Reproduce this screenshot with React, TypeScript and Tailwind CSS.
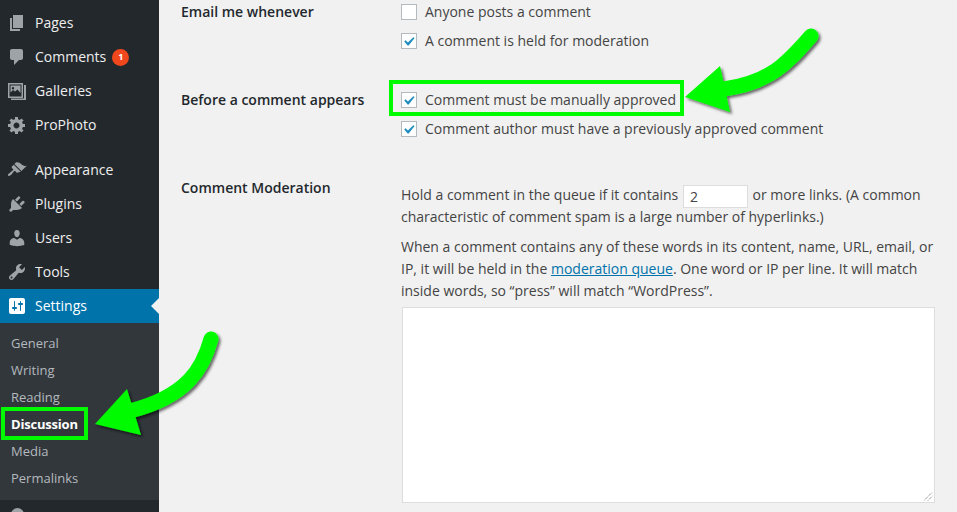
const ICONS: Record<string, string> = {
  pages: 'M6 15V2h10v13H6zm-1 1h8v2H3V5h2v11z',
  comments: 'M5 2h9c1.1 0 2 .9 2 2v7c0 1.1-.9 2-2 2h-2l-5 5v-5H5c-1.1 0-2-.9-2-2V4c0-1.1.9-2 2-2z',
  gear: 'M18 12h-2.18c-.17.7-.44 1.35-.81 1.93l1.54 1.54-2.1 2.1-1.54-1.54c-.58.36-1.23.63-1.91.79V19H8v-2.18c-.68-.16-1.33-.43-1.91-.79l-1.54 1.54-2.12-2.12 1.54-1.54c-.36-.58-.63-1.23-.79-1.91H1V9.03h2.17c.16-.7.44-1.35.8-1.94L2.43 5.55l2.1-2.1 1.54 1.54c.58-.37 1.24-.64 1.93-.81V2h3v2.18c.68.16 1.33.43 1.91.79l1.54-1.54 2.12 2.12-1.54 1.54c.36.59.64 1.24.8 1.94H18V12zm-8.5 1.5c1.66 0 3-1.34 3-3s-1.34-3-3-3-3 1.34-3 3 1.34 3 3 3z',
  appearance: 'M14.48 11.06L7.41 3.99l1.5-1.5c.5-.56 2.3-.47 3.51.32 1.21.8 1.43 1.28 2.91 2.1 1.18.64 2.45 1.26 4.45.85zm-.71.71L6.7 4.7 4.93 6.47c-.39.39-.39 1.02 0 1.41l1.06 1.06c.39.39.39 1.03 0 1.42-.6.6-1.43 1.11-2.21 1.69-.35.26-.7.53-1.01.84C1.43 13.23.4 14.96 1.4 15.96c.5.5 2.23-.53 3.07-1.38.31-.31.58-.66.84-1.01.58-.78 1.09-1.61 1.69-2.21.39-.39 1.02-.39 1.41 0l1.06 1.06c.39.39 1.02.39 1.41 0z',
  plugins: 'M13.11 4.36L9.87 7.6 8 5.73l3.24-3.24c.35-.34 1.05-.2 1.56.32.52.51.66 1.21.31 1.55zm-8 1.77l.91-1.12 9.01 9.01-1.19.84c-.71.71-2.63 1.16-3.82 1.16H6.14L4.9 17.26c-.59.59-1.54.59-2.12 0-.59-.58-.59-1.53 0-2.12l1.24-1.24v-3.88c0-1.13.4-3.19 1.09-3.89zm7.26 3.97l3.24-3.24c.34-.35 1.04-.21 1.55.31.52.51.66 1.21.31 1.55l-3.24 3.25z',
  users: 'M10 9.25c-2.27 0-2.73-3.44-2.73-3.44C7 4.02 7.82 2 9.97 2c2.16 0 2.98 2.02 2.71 3.81 0 0-.41 3.44-2.68 3.44zm0 2.57L12.72 10c2.39 0 4.52 2.33 4.52 4.53v2.49s-3.65 1.13-7.24 1.13c-3.65 0-7.24-1.13-7.24-1.13v-2.49c0-2.25 1.94-4.48 4.47-4.48z',
  tools: 'M16.68 9.77c-1.34 1.34-3.3 1.67-4.95.99l-5.41 6.52c-.99.99-2.59.99-3.58 0s-.99-2.59 0-3.57l6.52-5.42c-.68-1.65-.35-3.61.99-4.95 1.28-1.28 3.12-1.62 4.72-1.06l-2.89 2.89 2.82 2.82 2.86-2.87c.53 1.58.18 3.39-1.08 4.65zM3.81 16.21c.4.39 1.04.39 1.43 0 .4-.4.4-1.04 0-1.43-.39-.4-1.03-.4-1.43 0-.39.39-.39 1.03 0 1.43z',
  settings: 'M18 16V4c0-1.1-.9-2-2-2H4c-1.1 0-2 .9-2 2v12c0 1.1.9 2 2 2h12c1.1 0 2-.9 2-2zM8 11h1c.55 0 1 .45 1 1s-.45 1-1 1H8v1.5c0 .28-.22.5-.5.5s-.5-.22-.5-.5V13H6c-.55 0-1-.45-1-1s.45-1 1-1h1V5.5c0-.28.22-.5.5-.5s.5.22.5.5V11zm5-2h-1c-.55 0-1-.45-1-1s.45-1 1-1h1V5.5c0-.28.22-.5.5-.5s.5.22.5.5V7h1c.55 0 1 .45 1 1s-.45 1-1 1h-1v5.5c0 .28-.22.5-.5.5s-.5-.22-.5-.5V9z',
  galleries: 'M1 2h15v15H1V2zm1.5 1.5v12h12v-12h-12zM3.500 4.500h10v7.500l-3-3.500-2.500 2-2-1.500-2.500 2.500V4.500zM6 6a1.200 1.200 0 1 0 0 2.400A1.200 1.200 0 0 0 6 6zM17 4h2v15H4v-1.500h13V4z',
};

const Icon = ({ name, white }: { name: string; white?: boolean }) => (
  <svg viewBox="0 0 20 20" className={`w-5 h-5 shrink-0 ${white ? 'fill-white' : 'fill-[#9ea3a8]'}`}>
    <path fillRule="evenodd" d={ICONS[name]} />
  </svg>
);

const MenuRow = ({ icon, label, badge }: { icon: string; label: string; badge?: string }) => (
  <div className="h-[34px] shrink-0 flex items-center pl-[7px] text-[14px] text-[#eeeeee]">
    <Icon name={icon} />
    <span className="ml-2 pb-[2px]">{label}</span>
    {badge && (
      <span className="ml-[6px] w-[17px] h-[17px] rounded-full bg-[#f1471d] text-white text-[9px] font-bold flex items-center justify-center">
        {badge}
      </span>
    )}
  </div>
);

const SUBMENU = ['General', 'Writing', 'Reading', 'Discussion', 'Media', 'Permalinks'];

const Sidebar = () => (
  <aside className="w-[159px] shrink-0 bg-[#23282d] flex flex-col pt-[6px]">
    <MenuRow icon="pages" label="Pages" />
    <MenuRow icon="comments" label="Comments" badge="1" />
    <MenuRow icon="galleries" label="Galleries" />
    <MenuRow icon="gear" label="ProPhoto" />
    <div className="h-[11px] shrink-0" />
    <MenuRow icon="appearance" label="Appearance" />
    <MenuRow icon="plugins" label="Plugins" />
    <MenuRow icon="users" label="Users" />
    <MenuRow icon="tools" label="Tools" />
    <div className="relative h-[34px] shrink-0 bg-[#0073aa] flex items-center pl-[7px] text-[14px] text-white">
      <Icon name="settings" white />
      <span className="ml-2 pb-[2px]">Settings</span>
      <span className="absolute right-0 top-[9px] border-y-8 border-r-8 border-y-transparent border-r-[#f1f1f1]" />
    </div>
    <div className="bg-[#32373c] pt-[7px] pb-[8px] h-[177px] shrink-0">
      {SUBMENU.map(item => (
        <div
          key={item}
          className={`h-[27px] flex items-center pl-[11px] text-[13px] ${item === 'Discussion' ? 'font-bold tracking-[-0.2px] text-white' : 'text-[#b4b9be]'}`}
        >
          {item}
        </div>
      ))}
    </div>
    <div className="flex items-start shrink-0 pl-[11px] pt-2 text-[13px] text-[#9ea3a8]">
      <span className="w-[13px] h-[13px] rounded-full bg-[#9ea3a8] shrink-0" />
      <span className="ml-[10px] leading-none pt-[3px]">Collapse menu</span>
    </div>
  </aside>
);

const Check = ({ on, label }: { on?: boolean; label: string }) => (
  <div className="h-[16px] flex items-center">
    <span className="w-4 h-4 bg-white border border-[#b4b9be] shrink-0 flex items-center justify-center">
      {on && (
        <svg viewBox="0 0 16 16" className="w-4 h-4 fill-[#1e8cbe]">
          <path d="M12.900 3.600l1.500 1.100-6.800 8.300H6.400L2.600 8.600l1.500-1.400 2.700 2.400z" />
        </svg>
      )}
    </span>
    <span className="ml-2">{label}</span>
  </div>
);

const Label = ({ children }: { children: string }) => (
  <div className="w-[220px] shrink-0 font-semibold text-[#23282d]">{children}</div>
);

const Arrows = () => (
  <svg viewBox="0 0 957 512" className="absolute inset-0 w-[957px] h-[512px] pointer-events-none">
    <defs>
      <filter id="drop" x="-20%" y="-20%" width="150%" height="150%">
        <feDropShadow dx="2" dy="2" stdDeviation="1.500" floodColor="#000" floodOpacity="0.6" />
      </filter>
    </defs>
    <g filter="url(#drop)">
      <path d="M211 339C203 368 188 396 130 411" fill="none" stroke="#00fa00" strokeWidth="15" strokeLinecap="round" />
      <path d="M95 424L127 389L141 435Z" fill="#00fa00" />
    </g>
    <g filter="url(#drop)">
      <path d="M811 36C788 62 772 82 724 89" fill="none" stroke="#00fa00" strokeWidth="15" strokeLinecap="round" />
      <path d="M685 97L720 66L730 112Z" fill="#00fa00" />
    </g>
  </svg>
);

const App = () => (
  <div className="relative w-[957px] h-[512px] overflow-hidden flex bg-[#f1f1f1] text-[14px] text-[#444444] font-['Open_Sans',sans-serif]">
    <Sidebar />
    <main className="flex-1 min-w-0 pl-[22px]">
      <div className="flex pt-[2px] leading-5">
        <Label>Email me whenever</Label>
        <div className="flex flex-col gap-[13px] pt-[2px]">
          <Check label="Anyone posts a comment" />
          <Check on label="A comment is held for moderation" />
        </div>
      </div>
      <div className="flex mt-[41px] leading-5">
        <Label>Before a comment appears</Label>
        <div className="flex flex-col gap-[13px] pt-[2px]">
          <Check on label="Comment must be manually approved" />
          <Check on label="Comment author must have a previously approved comment" />
        </div>
      </div>
      <div className="flex mt-[41px]">
        <div className="leading-5">
          <Label>Comment Moderation</Label>
        </div>
        <div className="w-[534px] leading-[22px] pt-[6px]">
          <p>
            Hold a comment in the queue if it contains{' '}
            <span className="inline-block align-middle w-[65px] h-[23px] mx-px -my-[3px] bg-white border border-[#dddddd] pl-[6px] leading-[21px]">2</span>{' '}
            or more links. (A common characteristic of comment spam is a large number of hyperlinks.)
          </p>
          <p className="mt-2">
            When a comment contains any of these words in its content, name, URL, email, or IP, it will be held in the{' '}
            <span className="text-[#0073aa] underline">moderation queue</span>. One word or IP per line. It will match inside words, so “press” will match “WordPress”.
          </p>
          <div className="relative mt-[5px] ml-px w-[533px] h-[196px] bg-white border border-[#dddddd]">
            <svg viewBox="0 0 9 9" className="absolute right-px bottom-px w-[9px] h-[9px] stroke-[#666666]" strokeDasharray="1 1">
              <path d="M0 8.500L8.500 0M4 8.500L8.500 4" fill="none" />
            </svg>
          </div>
        </div>
      </div>
    </main>
    <div className="absolute left-[389px] top-[80px] w-[295px] h-[36px] border-4 border-[#00fa00]" />
    <div className="absolute left-px top-[407px] w-[87px] h-[33px] border-4 border-[#00fa00]" />
    <Arrows />
  </div>
);

export default App;
